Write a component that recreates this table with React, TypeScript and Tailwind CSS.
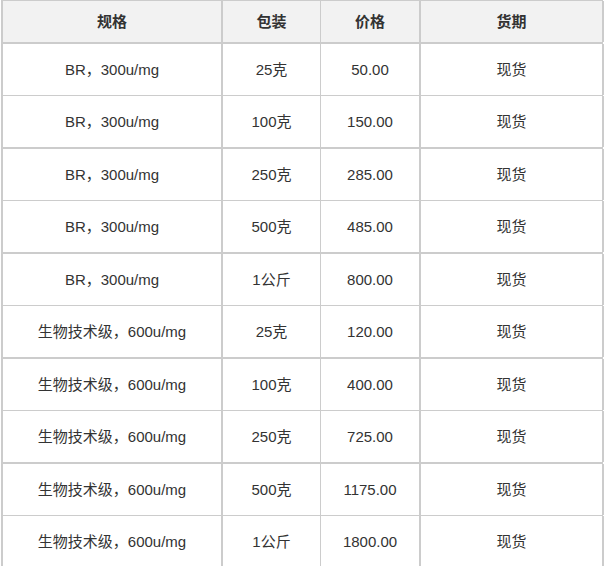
const rows = [
  ["BR，300u/mg", "25克", "50.00", "现货"],
  ["BR，300u/mg", "100克", "150.00", "现货"],
  ["BR，300u/mg", "250克", "285.00", "现货"],
  ["BR，300u/mg", "500克", "485.00", "现货"],
  ["BR，300u/mg", "1公斤", "800.00", "现货"],
  ["生物技术级，600u/mg", "25克", "120.00", "现货"],
  ["生物技术级，600u/mg", "100克", "400.00", "现货"],
  ["生物技术级，600u/mg", "250克", "725.00", "现货"],
  ["生物技术级，600u/mg", "500克", "1175.00", "现货"],
  ["生物技术级，600u/mg", "1公斤", "1800.00", "现货"],
];

const cols = "grid grid-cols-[220px_98px_100px_183px]";

export default function App() {
  return (
    <div className="h-[566px] overflow-hidden bg-white pl-px text-[15px] text-[#333] [font-family:'Liberation_Sans','Noto_Sans_CJK_SC',sans-serif]">
      <div className="w-[602px] border-t border-l-2 border-[#ccc]">
        <div className={`${cols} h-[43px] border-b-2 border-[#ccc] bg-[#f2f2f2] font-bold`}>
          <div className="flex items-center justify-center border-r-2 border-[#ccc] pt-[2px]">规格</div>
          <div className="flex items-center justify-center border-r border-[#ccc] pt-[2px]">包装</div>
          <div className="flex items-center justify-center border-r-2 border-[#ccc] pt-[2px]">价格</div>
          <div className="flex items-center justify-center border-r-2 border-[#ccc] pt-[2px]">货期</div>
        </div>
        {rows.map((r, i) => (
          <div
            key={i}
            className={`${cols} border-[#ccc] ${i % 2 === 0 ? "h-[52px] border-b" : "h-[53px] border-b-2"}`}
          >
            <div className="flex items-center justify-center border-r-2 border-[#ccc] pt-px">{r[0]}</div>
            <div className="flex items-center justify-center border-r border-[#ccc] pt-px">{r[1]}</div>
            <div className="flex items-center justify-center border-r-2 border-[#ccc] pt-px">{r[2]}</div>
            <div className="flex items-center justify-center border-r-2 border-[#ccc] pt-px">{r[3]}</div>
          </div>
        ))}
      </div>
    </div>
  );
}
